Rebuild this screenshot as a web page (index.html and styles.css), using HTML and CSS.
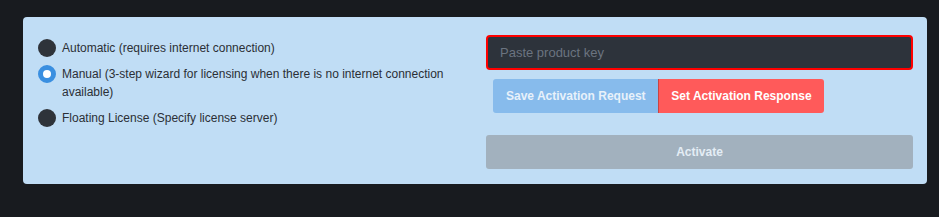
FILE: index.html
```html
<!DOCTYPE HTML>
<html>
<head>
<meta charset="UTF-8" />
<title>License activation</title>
<link rel="stylesheet" href="styles.css">
</head>
<body>
<div class="panel">
	<div class="leftCol">
		<label class="option">
			<span class="radio"></span>
			<span class="optText">Automatic (requires internet connection)</span>
		</label>
		<label class="option">
			<span class="radio checked"></span>
			<span class="optText">Manual (3-step wizard for licensing when there is no internet connection available)</span>
		</label>
		<label class="option">
			<span class="radio"></span>
			<span class="optText">Floating License (Specify license server)</span>
		</label>
	</div>

	<div class="rightCol">
		<input id="key" type="text" placeholder="Paste product key">
		<div class="btnGroup">
			<button class="btn save">Save Activation Request</button>
			<button class="btn set">Set Activation Response</button>
		</div>
		<button class="activate">Activate</button>
	</div>
</div>
</body>
</html>
```

FILE: styles.css
```css
html,
body {
	margin: 0;
	padding: 0;
	background-color: #181b1f;
	font-family: "Liberation Sans", Arial, sans-serif;
}

body {
	padding: 17px 12px 0 23px;
}

.panel {
	width: 904px;
	box-sizing: border-box;
	background-color: #c0ddf5;
	border-radius: 4px;
	padding: 18px 15px 15px 15px;
	display: grid;
	grid-template-columns: 428px 427px;
	column-gap: 20px;
}

.leftCol {
	display: flex;
	flex-direction: column;
	gap: 8px;
	padding-top: 4px;
	padding-right: 20px;
}

.option {
	display: flex;
	align-items: flex-start;
	gap: 6px;
	font-size: 12px;
	line-height: 18px;
	color: #2b2f36;
}

.radio {
	flex: 0 0 auto;
	width: 18px;
	height: 18px;
	border-radius: 50%;
	background-color: #2e333a;
	box-sizing: border-box;
}

.radio.checked {
	background-color: #ffffff;
	border: 5px solid #3a8fe0;
}

.rightCol {
	display: flex;
	flex-direction: column;
}

#key {
	height: 35px;
	box-sizing: border-box;
	border: 2px solid #ff0000;
	border-radius: 4px;
	background-color: #2d333b;
	padding: 0 12px;
	font-family: "Liberation Sans", Arial, sans-serif;
	font-size: 13px;
	color: #d0d6dc;
	outline: none;
}

#key::placeholder {
	color: #6b7480;
}

.btnGroup {
	display: flex;
	margin: 9px 0 0 7px;
}

.btn {
	height: 34px;
	border: none;
	padding: 0 13px;
	font-family: "Liberation Sans", Arial, sans-serif;
	font-size: 12px;
	font-weight: bold;
	white-space: nowrap;
}

.save {
	width: 165px;
	background-color: #87bbec;
	color: #e8f1fa;
	border-radius: 3px 0 0 3px;
}

.set {
	width: 166px;
	background-color: #ff5a5a;
	color: #ffffff;
	border-left: 1px solid #c84444;
	border-radius: 0 3px 3px 0;
	padding: 0;
}

.activate {
	margin-top: 22px;
	height: 34px;
	border: none;
	border-radius: 3px;
	background-color: #a2b1be;
	color: #e4edf5;
	font-family: "Liberation Sans", Arial, sans-serif;
	font-size: 12px;
	font-weight: bold;
}
```
